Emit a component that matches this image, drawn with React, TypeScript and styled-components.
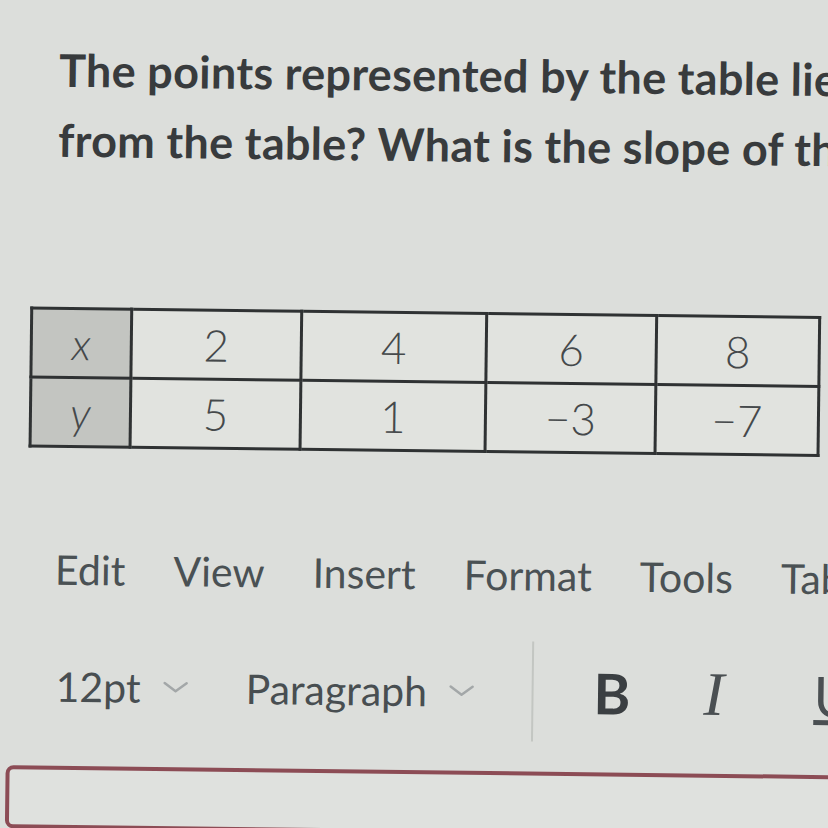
import React from "react";
import styled, { createGlobalStyle } from "styled-components";

const GlobalStyle = createGlobalStyle`
  html, body {
    margin: 0;
    padding: 0;
    background: #dcdedb;
    overflow: hidden;
  }
  body {
    font-family: Lato, "Liberation Sans", sans-serif;
    color: #3a3d3f;
  }
`;

const topRow = ["x", "2", "4", "6", "8"];
const bottomRow = ["y", "5", "1", "-3", "-7"];
const colWidths = [100, 170, 185, 170, 163];
const menu = ["Edit", "View", "Insert", "Format", "Tools", "Tab"];

const Chevron = () => (
  <svg width="30" height="16" viewBox="0 0 30 16" fill="none">
    <path d="M4 4 L15 12 L26 4" stroke="#a3a7a8" strokeWidth="2.5" strokeLinecap="round" strokeLinejoin="round" />
  </svg>
);

export default function App() {
  return (
    <>
      <GlobalStyle />
      <Page>
        <Question>
          <Line>The points represented by the table lie</Line>
          <Line>from the table? What is the slope of th</Line>
        </Question>

        <Table>
          <colgroup>
            {colWidths.map((w, i) => (
              <col key={i} style={{ width: w }} />
            ))}
          </colgroup>
          <tbody>
            <tr>
              {topRow.map((v, i) => (
                <Cell key={i} $head={i === 0}>{v}</Cell>
              ))}
            </tr>
            <tr>
              {bottomRow.map((v, i) => (
                <Cell key={i} $head={i === 0}>{v.replace("-", "\u2212")}</Cell>
              ))}
            </tr>
          </tbody>
        </Table>

        <MenuBar>
          {menu.map((m) => (
            <MenuItem key={m}>{m}</MenuItem>
          ))}
        </MenuBar>

        <Toolbar>
          <Dropdown $w={190}>
            12pt <Chevron />
          </Dropdown>
          <Dropdown $w={286}>
            Paragraph <Chevron />
          </Dropdown>
          <Divider />
          <BoldBtn>B</BoldBtn>
          <ItalicBtn>I</ItalicBtn>
          <UnderlineBtn>U</UnderlineBtn>
        </Toolbar>

        <Editor />
      </Page>
    </>
  );
}

const Page = styled.div`
  width: 900px;
  height: 828px;
  display: flex;
  flex-direction: column;
  transform: rotate(0.7deg);
  transform-origin: 0 0;
`;

const Question = styled.div`
  padding: 34px 0 0 60px;
  display: flex;
  flex-direction: column;
  font-size: 45px;
  font-weight: 700;
  letter-spacing: 0.3px;
  line-height: 70px;
  color: #383b3d;
`;

const Line = styled.div`
  white-space: nowrap;
`;

const Table = styled.table`
  margin: 132px 0 0 34px;
  border-collapse: collapse;
  table-layout: fixed;
  width: 788px;
  border: 3px solid #2f3233;
`;

const Cell = styled.td<{ $head?: boolean }>`
  height: 66px;
  padding: 0;
  border: 3px solid #2f3233;
  text-align: center;
  font-size: 44px;
  font-weight: 300;
  font-style: ${(p) => (p.$head ? "italic" : "normal")};
  color: #45494b;
  background: ${(p) => (p.$head ? "#c3c5c1" : "#e1e3df")};
`;

const MenuBar = styled.div`
  display: flex;
  gap: 48px;
  padding: 100px 0 0 62px;
  font-size: 41px;
  color: #4a5154;
  white-space: nowrap;
`;

const MenuItem = styled.span`
  line-height: 44px;
`;

const Toolbar = styled.div`
  display: flex;
  align-items: center;
  height: 100px;
  margin-top: 44px;
  padding-left: 64px;
  white-space: nowrap;
`;

const Dropdown = styled.div<{ $w: number }>`
  width: ${(p) => p.$w}px;
  display: flex;
  align-items: center;
  gap: 20px;
  font-size: 41px;
  color: #484e51;
`;

const Divider = styled.div`
  width: 2px;
  height: 100px;
  margin: 0 60px 0 0;
  background: #c3c6c2;
`;

const BoldBtn = styled.span`
  font-size: 56px;
  font-weight: 700;
  color: #3b3f42;
  width: 110px;
`;

const ItalicBtn = styled.span`
  font-family: "Liberation Serif", serif;
  font-style: italic;
  font-size: 62px;
  color: #4a4f52;
  width: 110px;
`;

const UnderlineBtn = styled.span`
  font-size: 56px;
  color: #4a4f52;
  text-decoration: underline;
`;

const Editor = styled.div`
  margin: 30px 0 0 15px;
  height: 200px;
  border: 4px solid #8c4c55;
  border-radius: 8px;
  background: #dfe1de;
`;
